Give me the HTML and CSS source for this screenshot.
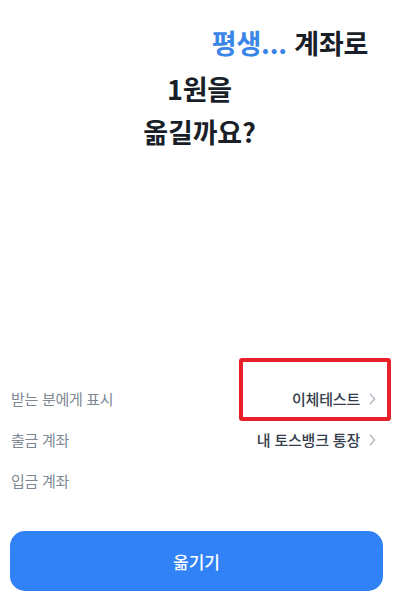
FILE: index.html
```html
<!DOCTYPE html>
<html lang="ko">
<head>
<meta charset="utf-8">
<link rel="stylesheet" href="styles.css">
</head>
<body>
<main class="screen">
  <section class="title">
    <div class="title-line first"><span class="masked"></span><span class="accent">평생...</span> 계좌로</div>
    <div class="title-line">1원을</div>
    <div class="title-line">옮길까요?</div>
  </section>
  <div class="spacer"></div>
  <section class="rows">
    <div class="row highlight">
      <span class="label">받는 분에게 표시</span>
      <span class="value">이체테스트<svg class="chev" viewBox="0 0 8 14" width="7" height="12"><path d="M1.5 1.5 L6.5 7 L1.5 12.5" fill="none" stroke="#b0b8c1" stroke-width="1.6" stroke-linecap="round" stroke-linejoin="round"/></svg></span>
      <span class="mark"></span>
    </div>
    <div class="row">
      <span class="label">출금 계좌</span>
      <span class="value">내 토스뱅크 통장<svg class="chev" viewBox="0 0 8 14" width="7" height="12"><path d="M1.5 1.5 L6.5 7 L1.5 12.5" fill="none" stroke="#b0b8c1" stroke-width="1.6" stroke-linecap="round" stroke-linejoin="round"/></svg></span>
    </div>
    <div class="row">
      <span class="label">입금 계좌</span>
      <span class="value masked-value"></span>
    </div>
  </section>
  <button class="cta">옮기기</button>
</main>
</body>
</html>
```

FILE: styles.css
```css
* { box-sizing: border-box; }
html, body {
  margin: 0;
  padding: 0;
  background: #ffffff;
}
body {
  font-family: "Noto Sans CJK KR", "Noto Sans", sans-serif;
  color: #191f28;
}
.screen {
  display: flex;
  flex-direction: column;
  height: 599px;
  width: 399px;
}
.title {
  padding-top: 21px;
  text-align: center;
  font-size: 27px;
  font-weight: 700;
  line-height: 43px;
  letter-spacing: -0.2px;
  color: #191f28;
}
.masked {
  display: inline-block;
  width: 181px;
  height: 40px;
  vertical-align: middle;
}
.accent {
  color: #3a86e8;
}
.spacer {
  flex: 1;
}
.rows {
  display: flex;
  flex-direction: column;
}
.row {
  position: relative;
  display: flex;
  align-items: center;
  justify-content: space-between;
  height: 41px;
  padding: 0 23px 0 11px;
}
.label {
  font-size: 15px;
  color: #7e8894;
  letter-spacing: -0.3px;
}
.value {
  display: flex;
  align-items: center;
  gap: 9px;
  font-size: 15px;
  font-weight: 500;
  color: #333d4b;
  letter-spacing: -0.2px;
}
.masked-value {
  width: 265px;
  height: 34px;
}
.chev {
  display: block;
}
.mark {
  position: absolute;
  top: -20px;
  right: 8px;
  width: 152px;
  height: 63px;
  border: 4px solid #e8202a;
  border-radius: 3px;
  pointer-events: none;
}
.cta {
  margin: 30px 16px 8px 10px;
  height: 60px;
  border: none;
  border-radius: 15px;
  background: #3182f6;
  color: #ffffff;
  font-family: "Noto Sans CJK KR", "Noto Sans", sans-serif;
  font-size: 17px;
  font-weight: 500;
}
```
